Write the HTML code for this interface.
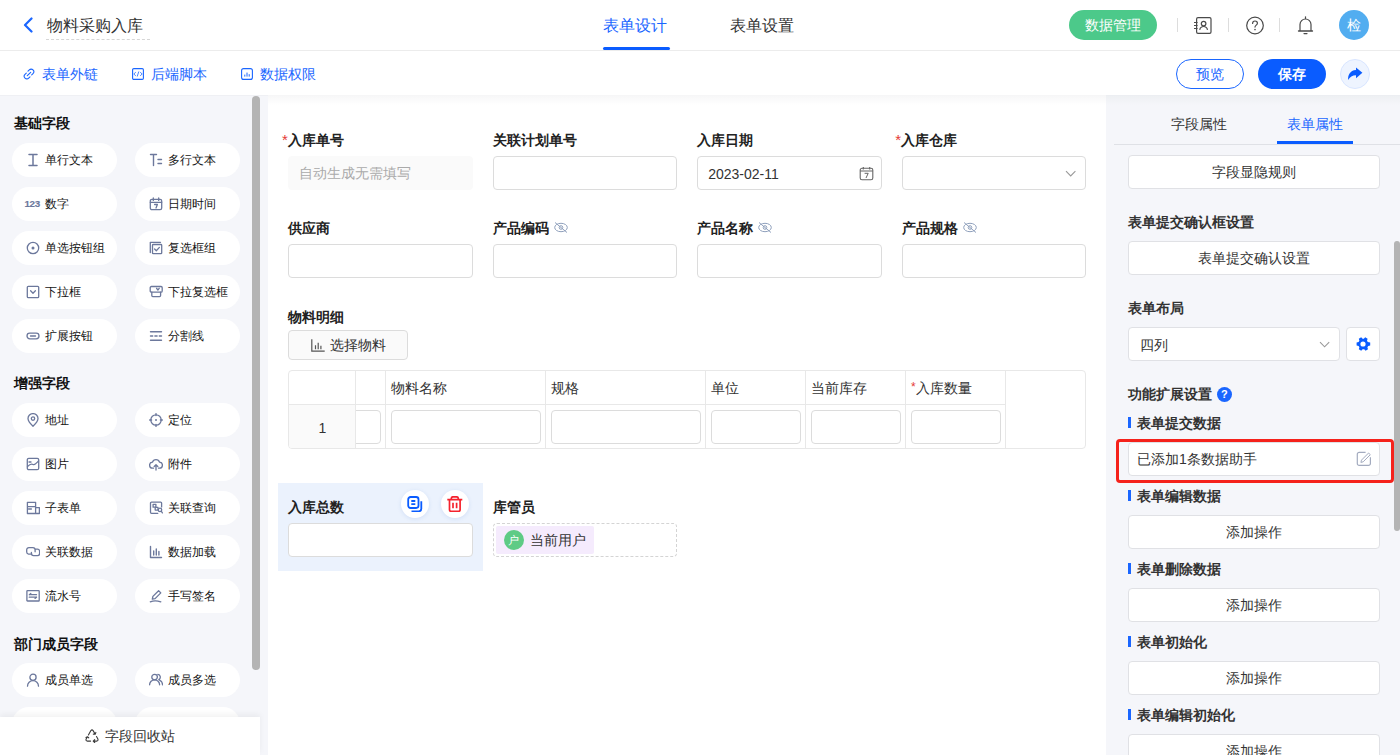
<!DOCTYPE html>
<html><head><meta charset="utf-8">
<style>
*{box-sizing:border-box;margin:0;padding:0}
html,body{width:1400px;height:755px;overflow:hidden;background:#fff;font-family:"Liberation Sans",sans-serif;color:#333}
.abs{position:absolute}
.t{position:absolute;white-space:nowrap;line-height:1}
/* header */
#hdr{position:absolute;left:0;top:0;width:1400px;height:51px;border-bottom:1px solid #ececec;background:#fff}
#sub{position:absolute;left:0;top:51px;width:1400px;height:44px;background:#fff;z-index:3}
#strip{position:absolute;left:0;top:95px;width:1400px;height:1px;background:linear-gradient(90deg,#eff0f4 0,#eff0f4 268px,#f6f6f7 268px,#f6f6f7 1106px,#eceef2 1106px)}
#left{position:absolute;left:0;top:96px;width:268px;height:659px;background:#f5f6fa;overflow:hidden}
#canvas{position:absolute;left:268px;top:96px;width:838px;height:659px;background:#fff}
#right{position:absolute;left:1106px;top:96px;width:294px;height:659px;background:#f5f6fa;overflow:hidden}
.chip{position:absolute;width:105px;height:34px;border-radius:17px;background:#fff}
.chip .ic{position:absolute;left:14px;top:10px;width:14px;height:14px}
.chip .lb{position:absolute;left:33px;top:0;line-height:34px;font-size:12px;color:#141414}
.sec{position:absolute;left:14px;font-size:14px;font-weight:700;color:#111;line-height:14px}
.lbl{position:absolute;font-size:14px;font-weight:700;color:#222;line-height:14px;white-space:nowrap}
.inp{position:absolute;width:184.6px;height:34px;border:1px solid #dcdcdc;border-radius:4px;background:#fff}
.req{color:#e53935;font-weight:400;position:relative;top:0px;font-size:15px;margin-right:0px}
.eye{display:inline-block;vertical-align:middle;margin-left:5px;position:relative;top:-2px}
.rbtn{position:absolute;left:22px;width:252px;height:34px;border:1px solid #e0e1e5;border-radius:4px;background:#fff;text-align:center;line-height:32px;font-size:14px;color:#333}
.rsec{position:absolute;left:22px;font-size:14px;font-weight:700;color:#333;line-height:14px;white-space:nowrap}
.rsub{position:absolute;left:22px;font-size:14px;font-weight:700;color:#333;line-height:14px;padding-left:9px;white-space:nowrap}
.rsub:before{content:"";position:absolute;left:0;top:1px;width:3px;height:11px;background:#1a66ff}
</style></head><body>

<!-- HEADER -->
<div id="hdr">
  <svg class="abs" style="left:22px;top:17px" width="12" height="16" viewBox="0 0 12 16"><path d="M9.5 1.5 L3 8 L9.5 14.5" fill="none" stroke="#1a66ff" stroke-width="2.2" stroke-linecap="round" stroke-linejoin="round"/></svg>
  <div class="t" style="left:47px;top:18px;font-size:16px;line-height:16px;color:#333">物料采购入库</div>
  <div class="abs" style="left:46px;top:39px;width:104px;height:0;border-top:1px dashed #d6d6d6"></div>
  <div class="t" style="left:603px;top:18px;font-size:16px;line-height:16px;color:#1a66ff">表单设计</div>
  <div class="abs" style="left:603px;top:47px;width:67px;height:3px;background:#0a5cff;border-radius:2px"></div>
  <div class="t" style="left:730px;top:18px;font-size:16px;line-height:16px;color:#333">表单设置</div>

  <div class="abs" style="left:1069px;top:10px;width:88px;height:30px;border-radius:15px;background:#4cc98a;color:#fff;font-size:14px;line-height:30px;text-align:center">数据管理</div>
  <div class="abs" style="left:1177px;top:18px;width:1px;height:14px;background:#ddd"></div>
  <svg class="abs" style="left:1193px;top:16px" width="20" height="19" viewBox="0 0 20 19">
    <rect x="3.6" y="1.6" width="14.4" height="15.8" rx="1.4" fill="none" stroke="#4a4a4a" stroke-width="1.2"/>
    <path d="M1 6.5h3.6M1 9.5h3.6M1 12.5h3.6" stroke="#4a4a4a" stroke-width="1.1"/>
    <circle cx="10.6" cy="7.6" r="2.3" fill="none" stroke="#4a4a4a" stroke-width="1.2"/>
    <path d="M6.7 13.8c0.5-2.1 2-3.3 3.9-3.3s3.4 1.2 3.9 3.3" fill="none" stroke="#4a4a4a" stroke-width="1.2"/>
  </svg>
  <div class="abs" style="left:1228px;top:18px;width:1px;height:14px;background:#ddd"></div>
  <svg class="abs" style="left:1245px;top:16px" width="20" height="20" viewBox="0 0 20 20">
    <circle cx="10" cy="9.5" r="8.3" fill="none" stroke="#4a4a4a" stroke-width="1.2"/>
    <path d="M7.6 7.4c0-1.5 1-2.4 2.4-2.4s2.4 0.9 2.4 2.2c0 1.8-2.4 2-2.4 3.9" fill="none" stroke="#4a4a4a" stroke-width="1.2" stroke-linecap="round"/>
    <circle cx="10" cy="13.6" r="0.8" fill="#4a4a4a"/>
  </svg>
  <div class="abs" style="left:1279px;top:18px;width:1px;height:14px;background:#ddd"></div>
  <svg class="abs" style="left:1297px;top:16px" width="17" height="19" viewBox="0 0 17 19">
    <path d="M8.5 0.8v1.6" stroke="#4a4a4a" stroke-width="1.2" stroke-linecap="round"/>
    <path d="M3 15V8.5a5.5 5.5 0 0 1 11 0V15" fill="none" stroke="#4a4a4a" stroke-width="1.2" stroke-linejoin="round"/>
    <path d="M1.5 15h14" stroke="#4a4a4a" stroke-width="1.3" stroke-linecap="round"/>
    <path d="M7 17.6h3" stroke="#4a4a4a" stroke-width="1.2" stroke-linecap="round"/>
  </svg>
  <div class="abs" style="left:1339px;top:10px;width:30px;height:30px;border-radius:15px;background:#52adf0;color:#fff;font-size:14px;line-height:30px;text-align:center">检</div>
</div>

<!-- SUB BAR -->
<div id="sub">
  <svg class="abs" style="left:23px;top:17px" width="12" height="12" viewBox="0 0 12 12"><path d="M5 3.2l1.3-1.3a2.6 2.6 0 0 1 3.7 3.7L8.7 6.9M7 8.8L5.7 10.1A2.6 2.6 0 0 1 2 6.4L3.3 5.1M4.3 7.7l3.4-3.4" fill="none" stroke="#1a66ff" stroke-width="1.1" stroke-linecap="round"/></svg>
  <div class="t" style="left:42px;top:16px;font-size:14px;line-height:14px;color:#1a66ff">表单外链</div>
  <svg class="abs" style="left:132px;top:17px" width="12" height="12" viewBox="0 0 12 12"><rect x="0.6" y="0.6" width="10.8" height="10.8" rx="1.2" fill="none" stroke="#1a66ff" stroke-width="1.1"/><path d="M3.8 4.2L1.8 6l2 1.8M8.2 4.2l2 1.8-2 1.8M6.8 3.5L5.2 8.5" fill="none" stroke="#1a66ff" stroke-width="0.8"/></svg>
  <div class="t" style="left:151px;top:16px;font-size:14px;line-height:14px;color:#1a66ff">后端脚本</div>
  <svg class="abs" style="left:241px;top:17px" width="12" height="12" viewBox="0 0 12 12"><rect x="0.6" y="0.6" width="10.8" height="10.8" rx="2" fill="none" stroke="#1a66ff" stroke-width="1.1"/><path d="M3.8 8.6V6.6M6 8.6V4.6M8.2 8.6V6.2" stroke="#1a66ff" stroke-width="1"/></svg>
  <div class="t" style="left:260px;top:16px;font-size:14px;line-height:14px;color:#1a66ff">数据权限</div>

  <div class="abs" style="left:1176px;top:8px;width:68px;height:30px;border-radius:15px;border:1px solid #1a66ff;color:#1a66ff;font-size:14px;line-height:28px;text-align:center">预览</div>
  <div class="abs" style="left:1258px;top:8px;width:68px;height:30px;border-radius:15px;background:#0a5cff;color:#fff;font-size:14px;font-weight:700;line-height:30px;text-align:center">保存</div>
  <div class="abs" style="left:1340px;top:8px;width:30px;height:30px;border-radius:15px;background:#eef4ff;border:1px solid #d9e6ff"></div>
  <svg class="abs" style="left:1330px;top:4px" width="50" height="40" viewBox="0 0 50 40"><path d="M26 12.5L32.4 17.8 26 23.2V20.3C22.5 20.3 19.8 22 18.2 24.9 17.7 20.8 19.8 15.4 26 15.1z" fill="#0a5cff"/></svg>
</div>

<div id="strip"></div>
<!-- LEFT PANEL -->
<div id="left">
  <div class="sec" style="top:20px">基础字段</div>
  <div class="abs" style="left:252px;top:0;width:8px;height:574px;border-radius:4px;background:#b4b4b4"></div>
  <div id="chips">
<div class="chip" style="left:12px;top:47px"><svg class="ic" width="14" height="14" viewBox="0 0 14 14" fill="none" stroke="#6c789c" stroke-width="1.3" stroke-linecap="round" stroke-linejoin="round"><path d="M3 1.5h8M3 12.5h8M7 1.5v11" stroke-width="1.5"/></svg><div class="lb">单行文本</div></div>
<div class="chip" style="left:135px;top:47px"><svg class="ic" width="14" height="14" viewBox="0 0 14 14" fill="none" stroke="#6c789c" stroke-width="1.3" stroke-linecap="round" stroke-linejoin="round"><path d="M1.5 1.5h6M4.5 1.5v11M9 6.5h3.5M9 10.5h3.5" stroke-width="1.4"/></svg><div class="lb">多行文本</div></div>
<div class="chip" style="left:12px;top:91px"><div class="abs" style="left:12.5px;top:11.5px;font-size:9.8px;font-weight:700;color:#6c789c;line-height:10px;letter-spacing:-0.35px;-webkit-text-stroke:0.15px #6c789c">123</div><div class="lb">数字</div></div>
<div class="chip" style="left:135px;top:91px"><svg class="ic" width="14" height="14" viewBox="0 0 14 14" fill="none" stroke="#6c789c" stroke-width="1.3" stroke-linecap="round" stroke-linejoin="round"><rect x="1.3" y="2.3" width="11.4" height="10.4" rx="1.6"/><path d="M1.3 5.3h11.4M4.3 1v2.4M9.7 1v2.4M5.6 7.5h2.8L7 11"/></svg><div class="lb">日期时间</div></div>
<div class="chip" style="left:12px;top:135px"><svg class="ic" width="14" height="14" viewBox="0 0 14 14" fill="none" stroke="#6c789c" stroke-width="1.3" stroke-linecap="round" stroke-linejoin="round"><circle cx="7" cy="7" r="5.7"/><circle cx="7" cy="7" r="1.5" fill="#6c789c" stroke="none"/></svg><div class="lb">单选按钮组</div></div>
<div class="chip" style="left:135px;top:135px"><svg class="ic" width="14" height="14" viewBox="0 0 14 14" fill="none" stroke="#6c789c" stroke-width="1.3" stroke-linecap="round" stroke-linejoin="round"><path d="M1.3 11.5V1.3h10.2"/><rect x="3.5" y="3.5" width="9.2" height="9.2" rx="0.8"/><path d="M5.6 8l1.7 1.7 3.1-3.3"/></svg><div class="lb">复选框组</div></div>
<div class="chip" style="left:12px;top:179px"><svg class="ic" width="14" height="14" viewBox="0 0 14 14" fill="none" stroke="#6c789c" stroke-width="1.3" stroke-linecap="round" stroke-linejoin="round"><rect x="1.3" y="1.3" width="11.4" height="11.4" rx="1"/><path d="M4.6 5.8l2.4 2.4 2.4-2.4"/></svg><div class="lb">下拉框</div></div>
<div class="chip" style="left:135px;top:179px"><svg class="ic" width="14" height="14" viewBox="0 0 14 14" fill="none" stroke="#6c789c" stroke-width="1.3" stroke-linecap="round" stroke-linejoin="round"><rect x="1.2" y="1.5" width="12" height="5.6" rx="1.2"/><path d="M2.8 7.1v3.5a1 1 0 0 0 1 1h6.8a1 1 0 0 0 1-1V7.1M7.6 3.3l1.3 1.7 1.3-1.7"/></svg><div class="lb">下拉复选框</div></div>
<div class="chip" style="left:12px;top:223px"><svg class="ic" width="14" height="14" viewBox="0 0 14 14" fill="none" stroke="#6c789c" stroke-width="1.3" stroke-linecap="round" stroke-linejoin="round"><rect x="1" y="4.2" width="12" height="5.6" rx="2.8"/><path d="M4.5 7h5"/></svg><div class="lb">扩展按钮</div></div>
<div class="chip" style="left:135px;top:223px"><svg class="ic" width="14" height="14" viewBox="0 0 14 14" fill="none" stroke="#6c789c" stroke-width="1.3" stroke-linecap="round" stroke-linejoin="round"><path d="M1.5 2.8h11M1.5 11.2h11M1.5 7h2.2M5.9 7h2.2M10.3 7h2.2" stroke-width="1.4"/></svg><div class="lb">分割线</div></div>
<div class="chip" style="left:12px;top:307px"><svg class="ic" width="14" height="14" viewBox="0 0 14 14" fill="none" stroke="#6c789c" stroke-width="1.3" stroke-linecap="round" stroke-linejoin="round"><path d="M7 13.2S2 8.8 2 5.6a5 5 0 0 1 10 0c0 3.2-5 7.6-5 7.6z"/><circle cx="7" cy="5.6" r="1.7"/></svg><div class="lb">地址</div></div>
<div class="chip" style="left:135px;top:307px"><svg class="ic" width="14" height="14" viewBox="0 0 14 14" fill="none" stroke="#6c789c" stroke-width="1.3" stroke-linecap="round" stroke-linejoin="round"><circle cx="7" cy="7" r="5.2"/><circle cx="7" cy="7" r="1" fill="#6c789c" stroke="none"/><path d="M7 0.6v2M7 11.4v2M0.6 7h2M11.4 7h2"/></svg><div class="lb">定位</div></div>
<div class="chip" style="left:12px;top:351px"><svg class="ic" width="14" height="14" viewBox="0 0 14 14" fill="none" stroke="#6c789c" stroke-width="1.3" stroke-linecap="round" stroke-linejoin="round"><rect x="1.3" y="1.3" width="11.4" height="11.4" rx="1.5"/><path d="M1.5 9.5c2.5-2.5 4-3 5.5-2s3-1 5.5-3.5M3 5h2"/></svg><div class="lb">图片</div></div>
<div class="chip" style="left:135px;top:351px"><svg class="ic" width="14" height="14" viewBox="0 0 14 14" fill="none" stroke="#6c789c" stroke-width="1.3" stroke-linecap="round" stroke-linejoin="round"><path d="M4.5 11.2H3.8a3 3 0 0 1-.4-6A3.8 3.8 0 0 1 10.6 5.2a3 3 0 0 1-.4 6H9.5M7 13V7.8M5.2 9.5L7 7.8l1.8 1.7"/></svg><div class="lb">附件</div></div>
<div class="chip" style="left:12px;top:395px"><svg class="ic" width="14" height="14" viewBox="0 0 14 14" fill="none" stroke="#6c789c" stroke-width="1.3" stroke-linecap="round" stroke-linejoin="round"><path d="M1.4 1.3h8.2v11.2H1.4zM1.4 5.6h8.2M2.6 8h2.8M9.6 6.6h3.8v5.9H9.6"/></svg><div class="lb">子表单</div></div>
<div class="chip" style="left:135px;top:395px"><svg class="ic" width="14" height="14" viewBox="0 0 14 14" fill="none" stroke="#6c789c" stroke-width="1.3" stroke-linecap="round" stroke-linejoin="round"><path d="M8.8 12.3H2.5a1 1 0 0 1-1-1V2.1a1 1 0 0 1 1-1h9.1a1 1 0 0 1 1 1v3.8"/><rect x="4.1" y="3.3" width="2.8" height="2.9"/><rect x="6.2" y="6.4" width="2.8" height="2.7"/><circle cx="11" cy="8.9" r="1.7"/><path d="M12.2 10.2l1.2 1.7"/></svg><div class="lb">关联查询</div></div>
<div class="chip" style="left:12px;top:439px"><svg class="ic" width="14" height="14" viewBox="0 0 14 14" fill="none" stroke="#6c789c" stroke-width="1.3" stroke-linecap="round" stroke-linejoin="round"><path d="M6 9.1H2.5A2.2 2.2 0 0 1 .7 6.9V4.8a2.2 2.2 0 0 1 2.2-2.2h4a2.2 2.2 0 0 1 2.2 2.2v2M5.4 7.4v1.1a2.1 2.1 0 0 0 2.1 2.1h4a2.1 2.1 0 0 0 2.1-2.1V6.3a2.1 2.1 0 0 0-2.1-2.1H9.9"/></svg><div class="lb">关联数据</div></div>
<div class="chip" style="left:135px;top:439px"><svg class="ic" width="14" height="14" viewBox="0 0 14 14" fill="none" stroke="#6c789c" stroke-width="1.3" stroke-linecap="round" stroke-linejoin="round"><path d="M1.5 1.5v11h11M4.7 10V6M7.3 10V4M9.9 10V6.5" stroke-width="1.4"/></svg><div class="lb">数据加载</div></div>
<div class="chip" style="left:12px;top:483px"><svg class="ic" width="14" height="14" viewBox="0 0 14 14" fill="none" stroke="#6c789c" stroke-width="1.3" stroke-linecap="round" stroke-linejoin="round"><rect x="0.9" y="1.6" width="12.3" height="10.4" rx="0.6"/><path d="M3.3 5.7h7.2M3.3 5.7l1.5-1.2M3.3 8.2h7.2M10.5 8.2L9 9.4"/></svg><div class="lb">流水号</div></div>
<div class="chip" style="left:135px;top:483px"><svg class="ic" width="14" height="14" viewBox="0 0 14 14" fill="none" stroke="#6c789c" stroke-width="1.3" stroke-linecap="round" stroke-linejoin="round"><path d="M1.3 12.8c3.5-1.5 6-1.5 10.5 0M3.3 10.2l0.6-2.8L9.6 1.7l2.2 2.2-5.7 5.7z"/></svg><div class="lb">手写签名</div></div>
<div class="chip" style="left:12px;top:567px"><svg class="ic" width="14" height="14" viewBox="0 0 14 14" fill="none" stroke="#6c789c" stroke-width="1.3" stroke-linecap="round" stroke-linejoin="round"><circle cx="7" cy="4.3" r="3.1"/><path d="M1.5 13.2a5.5 5.5 0 0 1 11 0"/></svg><div class="lb">成员单选</div></div>
<div class="chip" style="left:135px;top:567px"><svg class="ic" width="14" height="14" viewBox="0 0 14 14" fill="none" stroke="#6c789c" stroke-width="1.3" stroke-linecap="round" stroke-linejoin="round"><circle cx="5.6" cy="4.1" r="2.8"/><path d="M0.6 11.8a5 5 0 0 1 10 0M8.9 1.4a2.7 2.7 0 0 1 .9 5.1M10.6 7.1a5 5 0 0 1 2.9 4.7"/></svg><div class="lb">成员多选</div></div>
<div class="chip" style="left:12px;top:611px"><div class="lb"></div></div>
<div class="chip" style="left:135px;top:611px"><div class="lb"></div></div>
<div class="sec" style="top:280px">增强字段</div>
<div class="sec" style="top:540.5px">部门成员字段</div>
</div>
  <div class="abs" style="left:0;top:621px;width:260px;height:38px;background:#fff;box-shadow:0 -3px 6px rgba(0,0,0,0.05)">
    <svg class="abs" style="left:85px;top:11.5px" width="14" height="14" viewBox="0 0 14 14"><path d="M3.4 6L5.9 1.6Q7 0.2 8.1 1.6L10.1 5M8.3 5.1l1.9 0.1 0.7-1.8M11.5 7.6L12.9 10.1Q13.4 12 11.6 12.1H8.3M9.7 10.6L8.2 12.1l1.5 1.4M5.6 12.1H2.4Q0.6 12 1.1 10.1L2.3 7.9M0.9 8.4l1.5-0.6 1.3 1" fill="none" stroke="#3a3a3a" stroke-width="1.1" stroke-linecap="round" stroke-linejoin="round"/></svg>
    <div class="t" style="left:105px;top:12px;font-size:14px;line-height:14px;color:#333">字段回收站</div>
  </div>
</div>

<!-- CANVAS -->
<div id="canvas">
  <div class="abs" style="left:0;top:0;width:838px;height:9px;background:linear-gradient(#f7f7f8,#fff)"></div>
  <!-- row1 -->
  <div class="lbl" style="left:14px;top:37px"><span class="req">*</span>入库单号</div>
  <div class="inp" style="left:20px;top:60px;background:#fafafa;border-color:#fafafa"><span class="t" style="left:10px;top:9px;font-size:14px;line-height:14px;color:#aaa">自动生成无需填写</span></div>
  <div class="lbl" style="left:224.6px;top:37px">关联计划单号</div>
  <div class="inp" style="left:224.6px;top:60px"></div>
  <div class="lbl" style="left:429.2px;top:37px">入库日期</div>
  <div class="inp" style="left:429.2px;top:60px"><span class="t" style="left:10px;top:10px;font-size:14px;line-height:14px;color:#333">2023-02-11</span>
    <svg class="abs" style="left:161px;top:8.5px" width="15" height="15" viewBox="0 0 15 15"><rect x="1.2" y="2.3" width="12.6" height="11.5" rx="1.8" fill="none" stroke="#666" stroke-width="1.1"/><path d="M1.2 5h12.6M4.3 1v2.5M10.7 1v2.5" stroke="#666" stroke-width="1.1"/><path d="M5.6 7.3h3.6L7 12" fill="none" stroke="#666" stroke-width="1"/></svg>
  </div>
  <div class="lbl" style="left:627.3px;top:37px"><span class="req">*</span>入库仓库</div>
  <div class="inp" style="left:633.8px;top:60px">
    <svg class="abs" style="left:162.5px;top:12.5px" width="12" height="8" viewBox="0 0 12 8"><path d="M1 1.2l4.7 4.7 4.7-4.7" fill="none" stroke="#999" stroke-width="1.1"/></svg>
  </div>
  <!-- row2 -->
  <div class="lbl" style="left:20px;top:125px">供应商</div>
  <div class="inp" style="left:20px;top:148px"></div>
  <div class="lbl" style="left:224.6px;top:125px">产品编码<svg class="eye" width="14" height="11" viewBox="0 0 14 11"><ellipse cx="7" cy="5.5" rx="6.3" ry="4.2" fill="none" stroke="#8fa0bc" stroke-width="1"/><circle cx="7" cy="5.5" r="1.8" fill="none" stroke="#8fa0bc" stroke-width="1"/><path d="M1 0.5l12 10" stroke="#8fa0bc" stroke-width="1"/></svg></div>
  <div class="inp" style="left:224.6px;top:148px"></div>
  <div class="lbl" style="left:429.2px;top:125px">产品名称<svg class="eye" width="14" height="11" viewBox="0 0 14 11"><ellipse cx="7" cy="5.5" rx="6.3" ry="4.2" fill="none" stroke="#8fa0bc" stroke-width="1"/><circle cx="7" cy="5.5" r="1.8" fill="none" stroke="#8fa0bc" stroke-width="1"/><path d="M1 0.5l12 10" stroke="#8fa0bc" stroke-width="1"/></svg></div>
  <div class="inp" style="left:429.2px;top:148px"></div>
  <div class="lbl" style="left:633.8px;top:125px">产品规格<svg class="eye" width="14" height="11" viewBox="0 0 14 11"><ellipse cx="7" cy="5.5" rx="6.3" ry="4.2" fill="none" stroke="#8fa0bc" stroke-width="1"/><circle cx="7" cy="5.5" r="1.8" fill="none" stroke="#8fa0bc" stroke-width="1"/><path d="M1 0.5l12 10" stroke="#8fa0bc" stroke-width="1"/></svg></div>
  <div class="inp" style="left:633.8px;top:148px"></div>
  <!-- material detail -->
  <div class="lbl" style="left:20px;top:214px">物料明细</div>
  <div class="abs" style="left:20px;top:234px;width:120px;height:30px;border:1px solid #dcdcdc;border-radius:4px;background:#fafafa">
    <svg class="abs" style="left:22px;top:8px" width="14" height="13" viewBox="0 0 14 13"><path d="M0.8 0.3v11.9h12.9M4.5 10.3V6.3M7.2 10.3V3.8M9.9 10.3V6.8" fill="none" stroke="#555" stroke-width="1.2"/></svg>
    <span class="t" style="left:41px;top:7px;font-size:14px;line-height:14px;color:#333">选择物料</span>
  </div>
  <!-- table -->
  <div class="abs" style="left:20px;top:274px;width:798px;height:79px;border:1px solid #e8e8e8;border-radius:4px;overflow:hidden">
    <div class="abs" style="left:0;top:34px;width:67px;height:44px;background:#fafafa"></div>
    <div class="abs" style="left:0;top:33px;width:716px;height:1px;background:#e8e8e8"></div>
    <div class="abs" style="left:66px;top:0;width:1px;height:78px;background:#e8e8e8"></div>
    <div class="abs" style="left:96px;top:0;width:1px;height:78px;background:#e8e8e8"></div>
    <div class="abs" style="left:256px;top:0;width:1px;height:78px;background:#e8e8e8"></div>
    <div class="abs" style="left:416px;top:0;width:1px;height:78px;background:#e8e8e8"></div>
    <div class="abs" style="left:516px;top:0;width:1px;height:78px;background:#e8e8e8"></div>
    <div class="abs" style="left:616px;top:0;width:1px;height:78px;background:#e8e8e8"></div>
    <div class="abs" style="left:716px;top:0;width:1px;height:78px;background:#e8e8e8"></div>
    <span class="t" style="left:29.5px;top:50px;font-size:14px;line-height:14px;color:#333">1</span>
    <div class="abs" style="left:67px;top:39px;width:29px;height:34px;overflow:hidden"><div class="abs" style="left:-20px;top:0;width:45px;height:34px;border:1px solid #dcdcdc;border-radius:4px"></div></div>
    <span class="t" style="left:102px;top:10px;font-size:14px;line-height:14px;color:#333">物料名称</span>
    <div class="abs" style="left:102px;top:39px;width:150px;height:34px;border:1px solid #dcdcdc;border-radius:4px"></div>
    <span class="t" style="left:262px;top:10px;font-size:14px;line-height:14px;color:#333">规格</span>
    <div class="abs" style="left:262px;top:39px;width:150px;height:34px;border:1px solid #dcdcdc;border-radius:4px"></div>
    <span class="t" style="left:422px;top:10px;font-size:14px;line-height:14px;color:#333">单位</span>
    <div class="abs" style="left:422px;top:39px;width:90px;height:34px;border:1px solid #dcdcdc;border-radius:4px"></div>
    <span class="t" style="left:522px;top:10px;font-size:14px;line-height:14px;color:#333">当前库存</span>
    <div class="abs" style="left:522px;top:39px;width:90px;height:34px;border:1px solid #dcdcdc;border-radius:4px"></div>
    <span class="t" style="left:622px;top:10px;font-size:14px;line-height:14px;color:#333"><span style="color:#e53935;font-size:12px;position:relative;top:-2px">*</span>入库数量</span>
    <div class="abs" style="left:622px;top:39px;width:90px;height:34px;border:1px solid #dcdcdc;border-radius:4px"></div>
  </div>
  <!-- selected block -->
  <div class="abs" style="left:10px;top:387px;width:205px;height:88px;background:#ebf2fd"></div>
  <div class="lbl" style="left:20px;top:404px">入库总数</div>
  <div class="inp" style="left:20px;top:427px"></div>
  <div class="abs" style="left:133px;top:394px;width:28px;height:28px;border-radius:14px;background:#fff;box-shadow:0 1px 4px rgba(30,90,200,0.12)">
    <svg class="abs" style="left:6px;top:6px" width="16" height="16" viewBox="0 0 16 16"><rect x="1.2" y="1" width="10.3" height="11" rx="2.4" fill="none" stroke="#0a5cff" stroke-width="1.8"/><path d="M4.3 5h4M4.3 8.1h4" stroke="#0a5cff" stroke-width="1.8"/><path d="M14.3 5.3v7.4a2.6 2.6 0 0 1-2.6 2.6H4.5" fill="none" stroke="#0a5cff" stroke-width="1.8"/></svg>
  </div>
  <div class="abs" style="left:173px;top:394px;width:28px;height:28px;border-radius:14px;background:#fff;box-shadow:0 1px 4px rgba(30,90,200,0.12)">
    <svg class="abs" style="left:6px;top:6px" width="16" height="16" viewBox="0 0 16 16"><path d="M0.3 3.6h15M4.3 3.6V2.6a1.8 1.8 0 0 1 1.8-1.8h3.4a1.8 1.8 0 0 1 1.8 1.8v1M2.5 3.6v10.2a1.5 1.5 0 0 0 1.5 1.5h7.6a1.5 1.5 0 0 0 1.5-1.5V3.6M6 6.8v5.4M9.6 6.8v5.4" fill="none" stroke="#f5222d" stroke-width="1.7"/></svg>
  </div>
  <div class="lbl" style="left:224.6px;top:404px">库管员</div>
  <div class="abs" style="left:224.6px;top:427px;width:184.6px;height:34px;border:1px dashed #d4d4d4;border-radius:4px">
    <div class="abs" style="left:2px;top:2px;width:98px;height:28px;background:#f5ebfd;border-radius:2px">
      <div class="abs" style="left:8px;top:4px;width:20px;height:20px;border-radius:10px;background:#5ecb85;color:#fff;font-size:11px;line-height:20px;text-align:center">户</div>
      <span class="t" style="left:34px;top:7px;font-size:14px;line-height:14px;color:#333">当前用户</span>
    </div>
  </div>
</div>


<!-- RIGHT PANEL -->
<div id="right">
  <div class="abs" style="left:0;top:0;width:294px;height:9px;background:linear-gradient(#eef0f3,#f5f6fa)"></div>
  <span class="t" style="left:65px;top:21px;font-size:14px;line-height:14px;color:#333">字段属性</span>
  <span class="t" style="left:181px;top:21px;font-size:14px;line-height:14px;color:#1a66ff">表单属性</span>
  <div class="abs" style="left:8px;top:48px;width:286px;height:1px;background:#dfe1e6"></div>
  <div class="abs" style="left:171px;top:45px;width:76px;height:3px;background:#0a5cff"></div>
  <div class="rbtn" style="top:59px">字段显隐规则</div>
  <div class="rsec" style="top:119px">表单提交确认框设置</div>
  <div class="rbtn" style="top:145px">表单提交确认设置</div>
  <div class="rsec" style="top:205px">表单布局</div>
  <div class="abs" style="left:22px;top:231px;width:212px;height:34px;border:1px solid #e0e1e5;border-radius:4px;background:#fff">
    <span class="t" style="left:11px;top:10px;font-size:14px;line-height:14px;color:#333">四列</span>
    <svg class="abs" style="left:190px;top:13px" width="12" height="8" viewBox="0 0 12 8"><path d="M1 1.2l4.6 4.6 4.6-4.6" fill="none" stroke="#999" stroke-width="1.1"/></svg>
  </div>
  <div class="abs" style="left:240px;top:231px;width:34px;height:34px;border:1px solid #e0e1e5;border-radius:4px;background:#fff">
    <svg class="abs" style="left:8px;top:8px" width="16" height="16" viewBox="0 0 16 16"><path transform="rotate(90 8 8)" fill="#0a5cff" fill-rule="evenodd" d="M6.6 0.8h2.8l0.5 2 1.4 0.8 2-0.6 1.4 2.4-1.5 1.4v1.6l1.5 1.4-1.4 2.4-2-0.6-1.4 0.8-0.5 2H6.6l-0.5-2-1.4-0.8-2 0.6-1.4-2.4 1.5-1.4V7.2L1.3 5.8 2.7 3.4l2 0.6 1.4-0.8z M8 5.4a2.6 2.6 0 1 0 0 5.2 2.6 2.6 0 1 0 0-5.2z"/></svg>
  </div>
  <div class="rsec" style="top:291px">功能扩展设置</div>
  <div class="abs" style="left:111px;top:291px;width:14.5px;height:14.5px;border-radius:8px;background:#1a66ff;color:#fff;font-size:11px;font-weight:700;line-height:14.5px;text-align:center">?</div>
  <div class="rsub" style="top:320px">表单提交数据</div>
  <div class="abs" style="left:10px;top:343px;width:278px;height:44px;border:3px solid #f5221b;border-radius:4px"></div>
  <div class="abs" style="left:22px;top:346px;width:252px;height:34px;border:1px solid #e0e1e5;border-radius:4px;background:#fff">
    <span class="t" style="left:8px;top:9px;font-size:14px;line-height:14px;color:#333">已添加1条数据助手</span>
    <svg class="abs" style="left:227px;top:8.3px" width="16" height="16" viewBox="0 0 16 16"><path d="M9.6 1.3H3.2a1.9 1.9 0 0 0-1.9 1.9v9.3a1.9 1.9 0 0 0 1.9 1.9h9.3a1.9 1.9 0 0 0 1.9-1.9V6.2" fill="none" stroke="#a3abbf" stroke-width="1.2"/><path d="M4.9 11.4l0.6-2.3 7.1-7.1 1.7 1.7-7.1 7.1z" fill="none" stroke="#a3abbf" stroke-width="1" stroke-linejoin="round"/></svg>
  </div>
  <div class="rsub" style="top:393px">表单编辑数据</div>
  <div class="rbtn" style="top:419px">添加操作</div>
  <div class="rsub" style="top:466px">表单删除数据</div>
  <div class="rbtn" style="top:492px">添加操作</div>
  <div class="rsub" style="top:539px">表单初始化</div>
  <div class="rbtn" style="top:565px">添加操作</div>
  <div class="rsub" style="top:612px">表单编辑初始化</div>
  <div class="rbtn" style="top:638px">添加操作</div>
  <div class="abs" style="left:288px;top:145px;width:6px;height:290px;border-radius:3px;background:#b4b4b4"></div>
</div>


</body></html>
